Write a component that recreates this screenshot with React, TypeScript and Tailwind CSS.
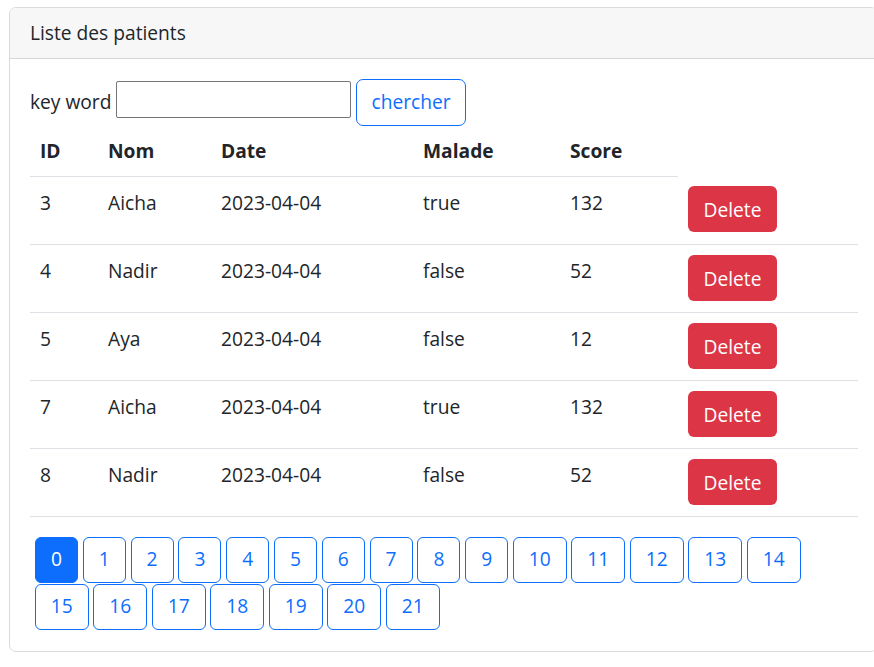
import React from "react";

const rows = [
  { id: 3, nom: "Aicha", date: "2023-04-04", malade: "true", score: 132 },
  { id: 4, nom: "Nadir", date: "2023-04-04", malade: "false", score: 52 },
  { id: 5, nom: "Aya", date: "2023-04-04", malade: "false", score: 12 },
  { id: 7, nom: "Aicha", date: "2023-04-04", malade: "true", score: 132 },
  { id: 8, nom: "Nadir", date: "2023-04-04", malade: "false", score: 52 },
];

const pages = Array.from({ length: 22 }, (_, i) => i);

export default function App() {
  return (
    <div
      className="bg-white text-[#212529] text-[19.2px] leading-[28.8px]"
      style={{ fontFamily: '"Open Sans", "Noto Sans", sans-serif' }}
    >
      <div className="pt-[7px] pl-[9px]">
        <div className="w-[869px] border border-[#dadada] rounded-[7px] overflow-hidden">
          <div className="h-[51px] flex items-center px-[20px] bg-[#f7f7f7] border-b border-[#d6d6d6]">
            Liste des patients
          </div>
          <div className="px-[20px] pt-[20px] pb-[20px]">
            <div className="flex items-start">
              <span className="mt-[9px]">key word</span>
              <input className="ml-[5px] mt-[2px] w-[235px] h-[37px] border border-[#767676] rounded-[2px] outline-none" />
              <button className="ml-[5px] h-[47px] px-[14px] border border-[#0d6efd] text-[#0d6efd] rounded-[7px] bg-white">
                chercher
              </button>
            </div>
            <table className="w-[828px] table-fixed border-collapse mt-[2px]">
              <colgroup>
                <col className="w-[68px]" />
                <col className="w-[113px]" />
                <col className="w-[202px]" />
                <col className="w-[147px]" />
                <col className="w-[118px]" />
                <col className="w-[180px]" />
              </colgroup>
              <thead>
                <tr>
                  {["ID", "Nom", "Date", "Malade", "Score"].map((h) => (
                    <th
                      key={h}
                      className="text-left font-bold px-[10px] pt-[9px] pb-[10px] border-b border-[#dee2e6]"
                    >
                      {h}
                    </th>
                  ))}
                </tr>
              </thead>
              <tbody>
                {rows.map((r) => (
                  <tr key={r.id} className="border-b border-[#dee2e6]">
                    <td className="align-top px-[10px] pt-[12px] h-[68px]">{r.id}</td>
                    <td className="align-top px-[10px] pt-[12px]">{r.nom}</td>
                    <td className="align-top px-[10px] pt-[12px]">{r.date}</td>
                    <td className="align-top px-[10px] pt-[12px]">{r.malade}</td>
                    <td className="align-top px-[10px] pt-[12px]">{r.score}</td>
                    <td className="align-top px-[10px] pt-[10px]">
                      <button className="h-[46px] w-[89px] bg-[#dc3545] text-white rounded-[6px] pt-[3px]">
                        Delete
                      </button>
                    </td>
                  </tr>
                ))}
              </tbody>
            </table>
            <div className="flex flex-wrap mt-[20px] pl-[5px] w-[828px]">
              {pages.map((p) => (
                <button
                  key={p}
                  className={
                    (p < 10 ? "w-[43px] " : "w-[53.7px] ") +
                    (p === 0
                      ? "h-[46px] mr-[4.8px] mb-[1px] rounded-[6px] border border-[#0d6efd] bg-[#0d6efd] text-white"
                      : "h-[46px] mr-[4.8px] mb-[1px] rounded-[6px] border border-[#0d6efd] bg-white text-[#0d6efd]")
                  }
                >
                  {p}
                </button>
              ))}
            </div>
          </div>
        </div>
      </div>
    </div>
  );
}
